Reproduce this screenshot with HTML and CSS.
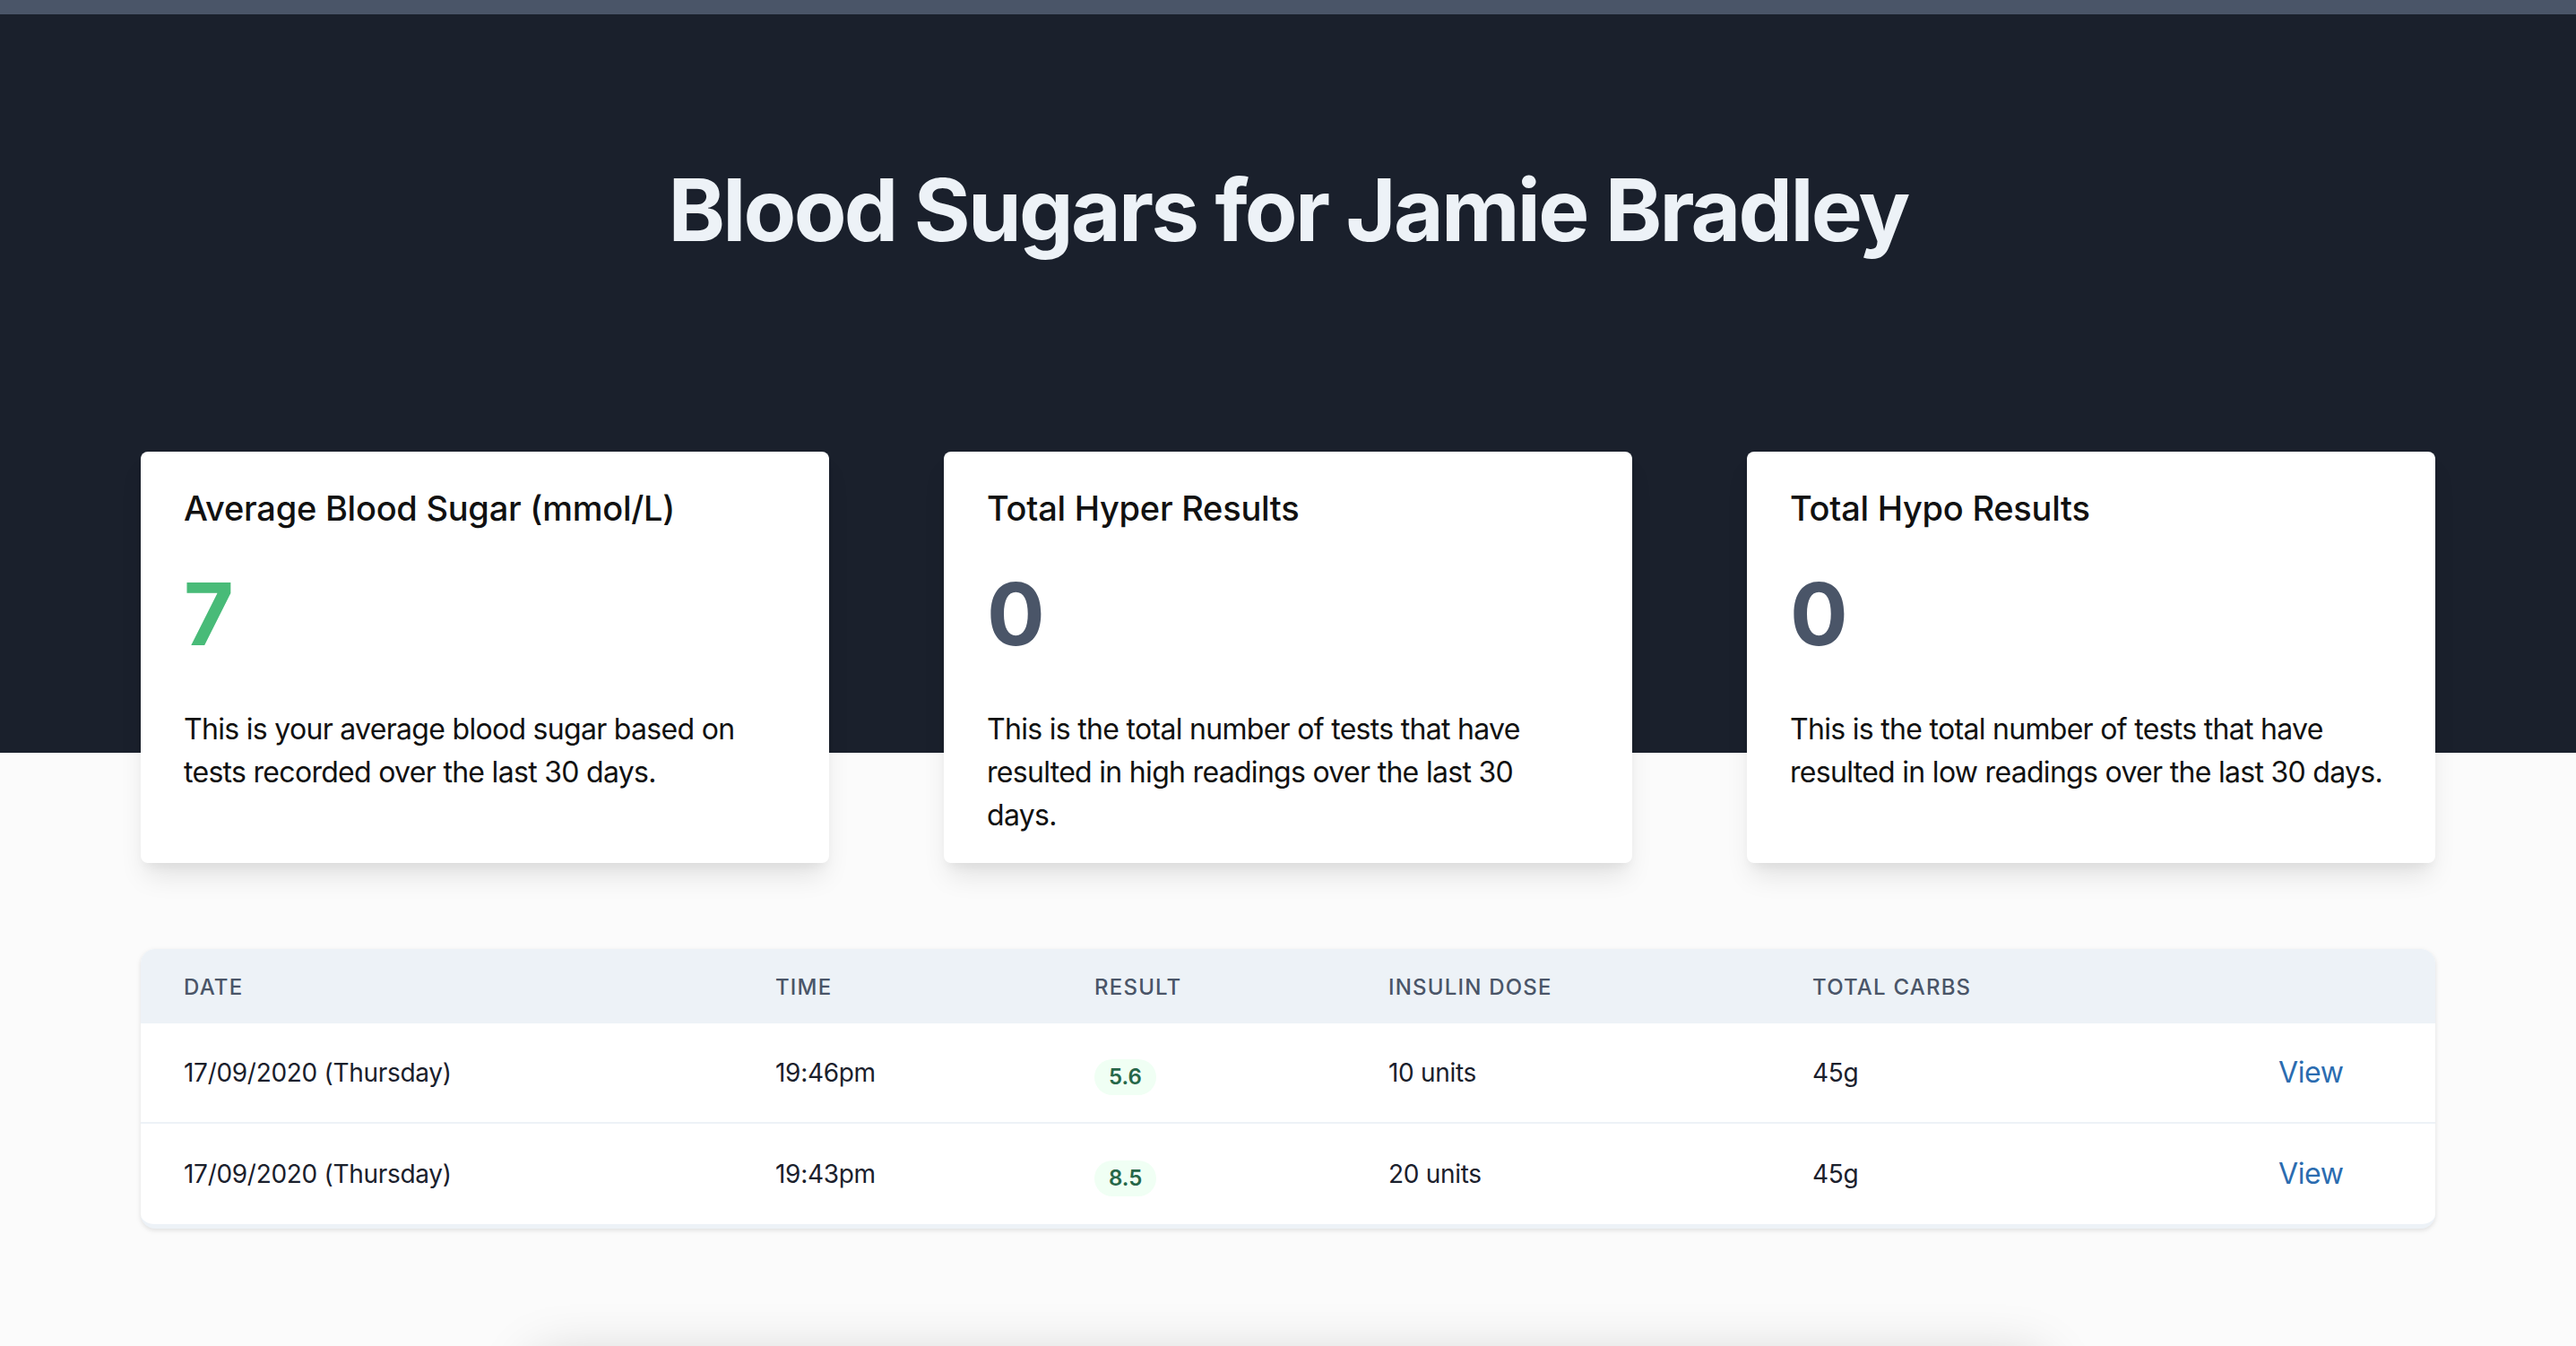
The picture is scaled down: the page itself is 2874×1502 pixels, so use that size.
FILE: index.html
```html
<!DOCTYPE html>
<html lang="en">
<head>
<meta charset="utf-8">
<title>Blood Sugars for Jamie Bradley</title>
<link rel="stylesheet" href="styles.css">
</head>
<body>
<div class="topbar"></div>
<header class="hero">
  <h1 class="hero-title">Blood Sugars for Jamie Bradley</h1>
</header>
<main class="content">
  <section class="stats">
    <div class="card">
      <h2 class="card-title">Average Blood Sugar (mmol/L)</h2>
      <div class="card-value value-green">7</div>
      <p class="card-desc">This is your average blood sugar based on tests recorded over the last 30 days.</p>
    </div>
    <div class="card">
      <h2 class="card-title">Total Hyper Results</h2>
      <div class="card-value value-gray">0</div>
      <p class="card-desc">This is the total number of tests that have resulted in high readings over the last 30 days.</p>
    </div>
    <div class="card">
      <h2 class="card-title">Total Hypo Results</h2>
      <div class="card-value value-gray">0</div>
      <p class="card-desc">This is the total number of tests that have resulted in low readings over the last 30 days.</p>
    </div>
  </section>

  <section class="table">
    <div class="row head">
      <div class="cell">Date</div>
      <div class="cell">Time</div>
      <div class="cell">Result</div>
      <div class="cell">Insulin Dose</div>
      <div class="cell">Total Carbs</div>
      <div class="cell"></div>
    </div>
    <div class="row body-row">
      <div class="cell">17/09/2020 (Thursday)</div>
      <div class="cell">19:46pm</div>
      <div class="cell"><span class="badge">5.6</span></div>
      <div class="cell">10 units</div>
      <div class="cell">45g</div>
      <div class="cell"><a class="view-link" href="#">View</a></div>
    </div>
    <div class="row body-row last">
      <div class="cell">17/09/2020 (Thursday)</div>
      <div class="cell">19:43pm</div>
      <div class="cell"><span class="badge">8.5</span></div>
      <div class="cell">20 units</div>
      <div class="cell">45g</div>
      <div class="cell"><a class="view-link" href="#">View</a></div>
    </div>
  </section>

  <section class="next-panel" aria-hidden="true"></section>
</main>
</body>
</html>
```

FILE: styles.css
```css
* { box-sizing: border-box; }

html, body {
  margin: 0;
  padding: 0;
}

body {
  background: #fbfbfb;
  font-family: "Inter", "Noto Sans", "Liberation Sans", sans-serif;
  color: #111111;
}

.topbar {
  height: 16px;
  background: #4a5568;
}

.hero {
  background: #1a202c;
  height: 824px;
  padding-top: 170px;
}

.hero-title {
  margin: 0;
  text-align: center;
  color: #edf2f7;
  font-size: 96px;
  line-height: 96px;
  font-weight: 700;
  letter-spacing: -2.7px;
}

.content {
  max-width: 2560px;
  margin: 0 auto;
  display: flex;
  flex-direction: column;
}

.stats {
  margin-top: -336px;
  display: grid;
  grid-template-columns: repeat(3, 1fr);
  gap: 128px;
}

.card {
  background: #ffffff;
  border-radius: 8px;
  height: 459px;
  padding: 35px 48px 0;
  box-shadow: 0 20px 30px -6px rgba(0, 0, 0, 0.1), 0 8px 12px -4px rgba(0, 0, 0, 0.05);
  display: flex;
  flex-direction: column;
}

.card-title {
  margin: 0;
  font-size: 38px;
  line-height: 56px;
  font-weight: 500;
  letter-spacing: -0.25px;
  color: #111111;
}

.card-value {
  margin-top: 42px;
  font-size: 96px;
  line-height: 96px;
  font-weight: 700;
}

.value-green { color: #48bb78; }
.value-gray { color: #4a5568; }

.card-desc {
  margin: 57px 0 0;
  font-size: 32px;
  line-height: 48px;
  letter-spacing: -0.7px;
  color: #111111;
}

.table {
  margin-top: 96px;
  background: #ffffff;
  border-radius: 16px;
  overflow: hidden;
  border-bottom: 5px solid #edf2f7;
  box-shadow: 0 2px 6px rgba(0, 0, 0, 0.08), 0 2px 4px rgba(0, 0, 0, 0.04);
}

.row {
  display: grid;
  grid-template-columns: 660px 356px 328px 473px 520px 1fr;
  align-items: center;
}

.cell {
  padding-left: 48px;
  white-space: nowrap;
}

.head {
  background: #edf2f7;
  height: 83px;
  padding-top: 2px;
}

.head .cell {
  font-size: 24px;
  line-height: 32px;
  font-weight: 500;
  text-transform: uppercase;
  letter-spacing: 0.05em;
  color: #4a5568;
}

.body-row {
  height: 112px;
  border-bottom: 2px solid #edf2f7;
  font-size: 28px;
  line-height: 40px;
  letter-spacing: -0.3px;
  color: #1a202c;
}

.body-row.last {
  border-bottom: none;
}

.badge {
  display: inline-flex;
  margin-top: 10px;
  padding: 0 16px;
  height: 40px;
  align-items: center;
  border-radius: 9999px;
  background: #f0fff4;
  color: #276749;
  font-size: 24px;
  font-weight: 600;
  letter-spacing: 0;
}

.view-link {
  font-size: 32px;
  color: #2b6cb0;
  text-decoration: none;
  letter-spacing: -0.4px;
}

.next-panel {
  margin: 147px auto 0;
  width: 1680px;
  height: 400px;
  background: #fbfbfb;
  box-shadow: 0 0 60px rgba(0, 0, 0, 0.2);
}
```
